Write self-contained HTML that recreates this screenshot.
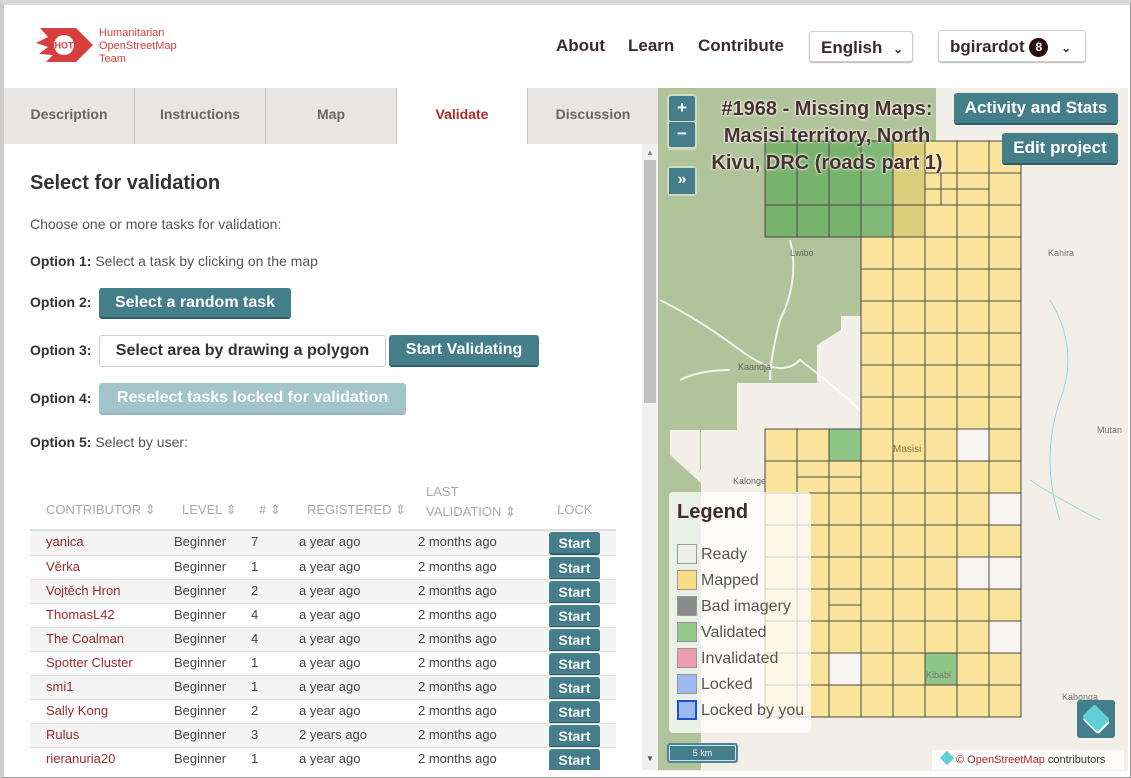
<!DOCTYPE html>
<html><head><meta charset="utf-8"><style>
*{box-sizing:border-box;margin:0;padding:0}
body{width:1131px;height:778px;overflow:hidden;background:#fff;font-family:"Liberation Sans",sans-serif;position:relative}
.frame{position:absolute;left:0;top:0;width:1131px;height:778px;border:1px solid #999;border-left:4px solid #ccc;border-top:5px solid #d8d8d8;pointer-events:none;z-index:50}
.abs{position:absolute}
.nav{position:absolute;top:36px;font-size:17px;font-weight:bold;color:#3d2b2b}
.btn{position:absolute;border:1px solid #ccc;border-radius:3px;background:#fff;box-shadow:0 1px 1px #bbb;font-weight:bold;color:#3d2b2b;font-size:17px}
.tab{position:absolute;top:88px;height:56px;width:131px;background:#e8e6e5;border-right:1px solid #c9c6bd;font-size:14px;font-weight:bold;color:#6b6464;text-align:center;line-height:52px}
.lbl{position:absolute;left:30px;font-size:14px;color:#333}
.lbl b{color:#333}
.tb{position:absolute;background:#447e8b;color:#fff;font-weight:bold;font-size:16px;border-radius:3px;border-bottom:2px solid #2f5d66;text-align:center;white-space:nowrap}
.row{position:absolute;left:30px;width:586px;height:24px;font-size:13px;color:#444;border-top:1px solid #ddd}
.row span{position:absolute;top:3px}
.row .n{left:16px;color:#9c2a2a}
.st{position:absolute;left:519px;top:1px;width:51px;height:23px;background:#447e8b;color:#fff;font-weight:bold;font-size:14px;border-radius:3px;text-align:center;line-height:22px;border-bottom:2px solid #2f5d66}
.th{position:absolute;font-size:13px;color:#a9a9a9}
.lg{position:absolute;left:677px;font-size:16px;color:#555;white-space:nowrap}
.lg i{position:absolute;left:0;width:20px;height:20px;border:1px solid #999}
.lg span{position:absolute;left:24px;top:2px}
</style></head><body>
<div class="frame"></div>
<!-- header -->
<svg class="abs" style="left:36px;top:28px" width="58" height="35" viewBox="0 0 58 35">
<polygon points="4,0 40,0 57,17 40,34 10,34 17,27 3,26 12,19 0,15 12,9" fill="#d73f3f"/>
<circle cx="28" cy="17" r="10" fill="#fff"/>
<text x="28" y="20.5" text-anchor="middle" font-size="9" font-weight="bold" fill="#d73f3f" font-family="Liberation Sans">HOT</text>
</svg>
<div class="abs" style="left:99px;top:27px;font-size:11px;line-height:13px;color:#d73f3f">Humanitarian<br>OpenStreetMap<br>Team</div>
<div class="nav" style="left:556px">About</div>
<div class="nav" style="left:628px">Learn</div>
<div class="nav" style="left:698px">Contribute</div>
<div class="btn" style="left:809px;top:31px;width:104px;height:31px;padding:6px 0 0 11px">English <span style="font-size:12px;margin-left:6px">&#8964;</span></div>
<div class="btn" style="left:938px;top:30px;width:148px;height:32px;padding:6px 0 0 11px">bgirardot <span style="display:inline-block;width:19px;height:19px;border-radius:50%;background:#2a0a0a;color:#fff;font-size:12px;text-align:center;line-height:19px;vertical-align:1px">8</span> <span style="font-size:12px;margin-left:8px">&#8964;</span></div>
<!-- tabs -->
<div class="tab" style="left:4px">Description</div>
<div class="tab" style="left:135px">Instructions</div>
<div class="tab" style="left:266px">Map</div>
<div class="tab" style="left:397px;background:#fff;color:#b02a2a">Validate</div>
<div class="tab" style="left:528px;width:130px;border-right:none">Discussion</div>
<!-- scrollbar -->
<div class="abs" style="left:642px;top:144px;width:16px;height:626px;background:#f0f0f0"></div>
<div class="abs" style="left:644px;top:160px;width:12px;height:243px;background:#c1c1c1"></div>
<div class="abs" style="left:646px;top:148px;font-size:8px;color:#888">&#9650;</div>
<div class="abs" style="left:646px;top:754px;font-size:8px;color:#555">&#9660;</div>
<!-- content -->
<div class="abs" style="left:30px;top:172px;font-size:20px;font-weight:bold;color:#333">Select for validation</div>
<div class="lbl" style="top:216px;color:#555">Choose one or more tasks for validation:</div>
<div class="lbl" style="top:253px"><b>Option 1:</b> <span style="color:#555">Select a task by clicking on the map</span></div>
<div class="lbl" style="top:294px"><b>Option 2:</b></div>
<div class="tb" style="left:99px;top:288px;width:192px;height:31px;line-height:29px">Select a random task</div>
<div class="lbl" style="top:342px"><b>Option 3:</b></div>
<div class="abs" style="left:99px;top:335px;width:287px;height:32px;border:1px solid #ccc;border-radius:3px;font-size:16px;font-weight:bold;color:#333;text-align:center;line-height:30px">Select area by drawing a polygon</div>
<div class="tb" style="left:389px;top:335px;width:150px;height:32px;line-height:30px">Start Validating</div>
<div class="lbl" style="top:390px"><b>Option 4:</b></div>
<div class="tb" style="left:99px;top:383px;width:307px;height:32px;line-height:30px;background:#a2c4cb;border-bottom-color:#98b6bd">Reselect tasks locked for validation</div>
<div class="lbl" style="top:434px"><b>Option 5:</b> <span style="color:#555">Select by user:</span></div>
<div class="th" style="left:46px;top:502px">CONTRIBUTOR &#8661;</div>
<div class="th" style="left:182px;top:502px">LEVEL &#8661;</div>
<div class="th" style="left:259px;top:502px"># &#8661;</div>
<div class="th" style="left:307px;top:502px">REGISTERED &#8661;</div>
<div class="th" style="left:426px;top:482px;line-height:20px">LAST<br>VALIDATION &#8661;</div>
<div class="th" style="left:557px;top:502px">LOCK</div>
<div class="abs" style="left:30px;top:529px;width:586px;height:2px;background:#ddd"></div>
<div class="row" style="top:531px;background:#f4f4f4;border-top:none"><span class="n">yanica</span><span style="left:144px">Beginner</span><span style="left:221px">7</span><span style="left:269px">a year ago</span><span style="left:388px">2 months ago</span><div class="st">Start</div></div>
<div class="row" style="top:555px"><span class="n">Věrka</span><span style="left:144px">Beginner</span><span style="left:221px">1</span><span style="left:269px">a year ago</span><span style="left:388px">2 months ago</span><div class="st">Start</div></div>
<div class="row" style="top:579px;background:#f4f4f4"><span class="n">Vojtěch Hron</span><span style="left:144px">Beginner</span><span style="left:221px">2</span><span style="left:269px">a year ago</span><span style="left:388px">2 months ago</span><div class="st">Start</div></div>
<div class="row" style="top:603px"><span class="n">ThomasL42</span><span style="left:144px">Beginner</span><span style="left:221px">4</span><span style="left:269px">a year ago</span><span style="left:388px">2 months ago</span><div class="st">Start</div></div>
<div class="row" style="top:627px;background:#f4f4f4"><span class="n">The Coalman</span><span style="left:144px">Beginner</span><span style="left:221px">4</span><span style="left:269px">a year ago</span><span style="left:388px">2 months ago</span><div class="st">Start</div></div>
<div class="row" style="top:651px"><span class="n">Spotter Cluster</span><span style="left:144px">Beginner</span><span style="left:221px">1</span><span style="left:269px">a year ago</span><span style="left:388px">2 months ago</span><div class="st">Start</div></div>
<div class="row" style="top:675px;background:#f4f4f4"><span class="n">smi1</span><span style="left:144px">Beginner</span><span style="left:221px">1</span><span style="left:269px">a year ago</span><span style="left:388px">2 months ago</span><div class="st">Start</div></div>
<div class="row" style="top:699px"><span class="n">Sally Kong</span><span style="left:144px">Beginner</span><span style="left:221px">2</span><span style="left:269px">a year ago</span><span style="left:388px">2 months ago</span><div class="st">Start</div></div>
<div class="row" style="top:723px;background:#f4f4f4"><span class="n">Rulus</span><span style="left:144px">Beginner</span><span style="left:221px">3</span><span style="left:269px">2 years ago</span><span style="left:388px">2 months ago</span><div class="st">Start</div></div>
<div class="row" style="top:747px;height:23px;overflow:hidden"><span class="n">rieranuria20</span><span style="left:144px">Beginner</span><span style="left:221px">1</span><span style="left:269px">a year ago</span><span style="left:388px">2 months ago</span><div class="st">Start</div></div>
<!-- map -->
<svg class="abs" style="left:658px;top:88px" width="470" height="683" viewBox="658 88 470 683">
<rect x="658" y="88" width="470" height="683" fill="#f2efe9"/>
<polygon points="658,88 936,88 936,141 861,141 861,316 841,316 841,330 817,345 817,383 737,383 737,430 701,430 701,770 658,770" fill="#b1c39a"/>
<polygon points="670,430 700,430 700,470 720,470 720,500 670,455" fill="#f2efe9"/>
<path d="M660,300 Q700,320 740,350 T800,360 Q840,390 870,420 M790,240 Q800,280 780,320 Q770,360 770,380 M680,380 Q700,370 730,370" stroke="#fff" stroke-width="2" fill="none" opacity=".8"/>
<path d="M1050,300 Q1080,350 1060,400 Q1040,460 1060,520 M1030,480 Q1060,500 1100,520" stroke="#9fd3dd" stroke-width="1" fill="none"/>
<g stroke="#4a4a4a" stroke-width="1">
<rect x="765" y="141" width="128" height="96" fill="#6fae63" fill-opacity=".85"/>
<rect x="893" y="141" width="32" height="96" fill="#d6c96a" fill-opacity=".85"/>
<rect x="925" y="141" width="96" height="96" fill="#fae196" fill-opacity=".95"/>
<rect x="861" y="237" width="160" height="192" fill="#fae196" fill-opacity=".95"/>
<rect x="765" y="429" width="256" height="288" fill="#fae196" fill-opacity=".95"/>
<rect x="829" y="429" width="32" height="32" fill="#8fc586"/>
<rect x="925" y="653" width="32" height="32" fill="#8fc586"/>
<rect x="957" y="429" width="32" height="32" fill="#f6f5f1"/>
<rect x="989" y="493" width="32" height="32" fill="#f6f5f1"/>
<rect x="957" y="557" width="64" height="32" fill="#f6f5f1"/>
<rect x="989" y="621" width="32" height="32" fill="#f6f5f1"/>
<rect x="829" y="653" width="32" height="32" fill="#f6f5f1"/>
<path d="M797,141V237M829,141V237M861,141V237M893,141V237M925,141V237M957,141V717M989,141V717M893,237V717M925,237V717M861,237V717M797,429V717M829,429V717M765,205H1021M925,173H1021M765,237H1021M861,269H1021M861,301H1021M861,333H1021M861,365H1021M861,397H1021M765,461H1021M765,493H1021M765,525H1021M765,557H1021M765,589H1021M765,621H1021M765,653H1021M765,685H1021M925,189H989M941,173V205M829,461V477M797,477H861M829,605H861M797,589V621" fill="none"/>
</g>
<text x="790" y="256" font-size="9" fill="#666">Lwibo</text>
<text x="738" y="370" font-size="9" fill="#666">Kaandja</text>
<text x="733" y="484" font-size="9" fill="#666">Kalonge</text>
<text x="893" y="452" font-size="10" fill="#8a7a4a">Masisi</text>
<text x="1048" y="256" font-size="9" fill="#777">Kahira</text>
<text x="1097" y="433" font-size="9" fill="#777">Mutan</text>
<text x="1062" y="700" font-size="9" fill="#777">Kabonga</text>
<text x="926" y="678" font-size="9" fill="#777">Kibabi</text>
</svg>
<!-- map controls -->
<div class="abs" style="left:667px;top:94px;width:30px;height:56px;border-radius:4px;background:rgba(255,255,255,.4);padding:2px">
<div style="width:26px;height:25px;background:#447e8b;color:#fff;text-align:center;font-weight:bold;font-size:17px;line-height:24px;border-radius:2px">+</div>
<div style="width:26px;height:25px;background:#447e8b;color:#fff;text-align:center;font-weight:bold;font-size:17px;line-height:24px;margin-top:1px;border-radius:2px">−</div></div>
<div class="abs" style="left:667px;top:166px;width:30px;height:30px;border-radius:4px;background:rgba(255,255,255,.4);padding:2px"><div style="width:26px;height:26px;background:#447e8b;color:#fff;text-align:center;font-weight:bold;font-size:16px;line-height:24px">»</div></div>
<div class="abs" style="left:687px;top:96px;width:280px;text-align:center;font-size:20px;font-weight:bold;color:#4b3030;line-height:27px;white-space:nowrap;text-shadow:0 0 3px #fff,0 0 2px #fff">#1968 - Missing Maps:<br>Masisi territory, North<br>Kivu, DRC (roads part 1)</div>
<div class="tb" style="left:954px;top:93px;width:164px;height:32px;line-height:30px;font-size:17px">Activity and Stats</div>
<div class="tb" style="left:1002px;top:133px;width:116px;height:32px;line-height:30px;font-size:17px">Edit project</div>
<!-- legend -->
<div class="abs" style="left:669px;top:492px;width:142px;height:241px;background:rgba(255,255,255,.75);border-radius:4px"></div>
<div class="abs" style="left:677px;top:501px;font-size:20px;font-weight:bold;color:#3d2b2b">Legend</div>
<div class="lg" style="top:544px"><i style="background:#eeeee9"></i><span>Ready</span></div>
<div class="lg" style="top:570px"><i style="background:#f9dd86"></i><span>Mapped</span></div>
<div class="lg" style="top:596px"><i style="background:#8a8a8a"></i><span>Bad imagery</span></div>
<div class="lg" style="top:622px"><i style="background:#93c68a"></i><span>Validated</span></div>
<div class="lg" style="top:648px"><i style="background:#f09cb0"></i><span>Invalidated</span></div>
<div class="lg" style="top:674px"><i style="background:#9eb9f0"></i><span>Locked</span></div>
<div class="lg" style="top:700px"><i style="background:#9eb9f0;border:2px solid #1a4fe0"></i><span>Locked by you</span></div>
<div class="abs" style="left:667px;top:743px;width:71px;height:20px;background:#447e8b;border-radius:3px;color:#fff;font-size:9px;text-align:center;line-height:16px;border:2px solid #4a8794;box-shadow:inset 0 0 0 1px #cde">5 km</div>
<div class="abs" style="left:1077px;top:700px;width:38px;height:38px;background:#447e8b;border-radius:3px"><div style="position:absolute;left:8px;top:7px;width:22px;height:22px;background:#5fcfd8;transform:rotate(45deg) scaleY(.8);border-radius:3px;box-shadow:2px 2px 0 #fff"></div></div>
<div class="abs" style="left:932px;top:750px;width:192px;height:20px;background:rgba(255,255,255,.8);font-size:11px;color:#333;padding:3px 0 0 10px"><span style="display:inline-block;width:10px;height:10px;background:#5fcfd8;transform:rotate(45deg);margin-right:4px"></span><span style="color:#b02a2a">© OpenStreetMap</span> contributors</div>
</body></html>
